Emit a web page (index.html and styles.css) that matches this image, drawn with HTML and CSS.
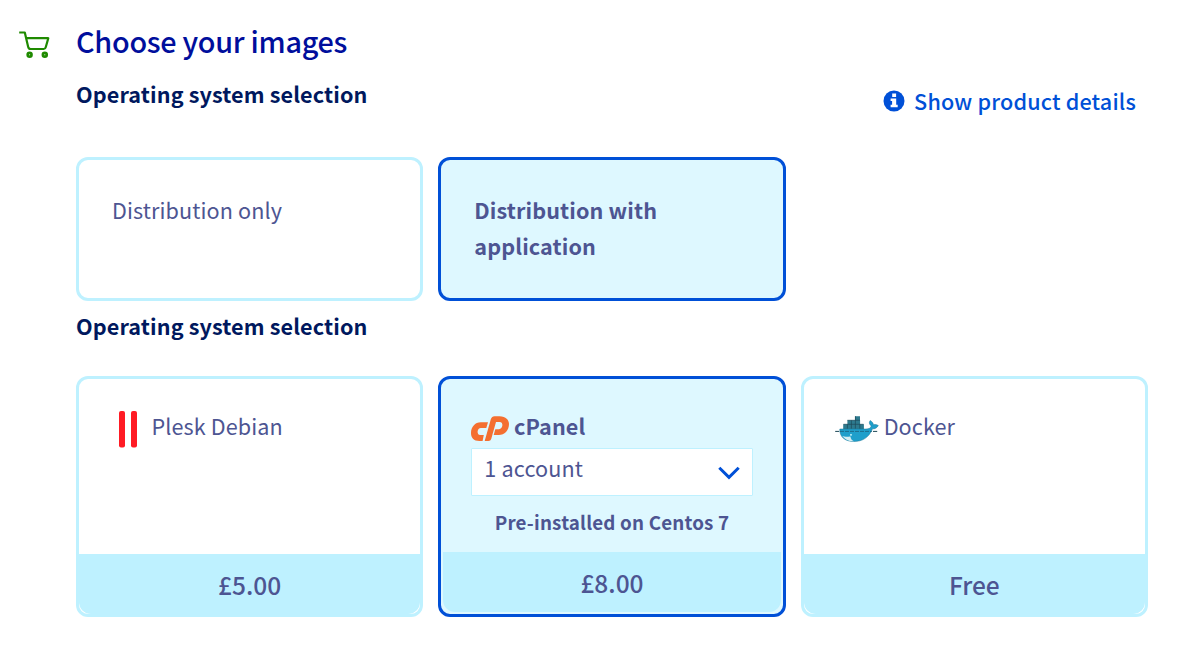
FILE: index.html
```
<!DOCTYPE html>
<html lang="en">
<head>
<meta charset="utf-8">
<title>Choose your images</title>
<link rel="stylesheet" href="styles.css">
</head>
<body>
<main class="step">
  <svg class="cart" viewBox="0 0 32 30" fill="none" stroke="#1f8a00" stroke-width="2.2" stroke-linejoin="round">
    <path d="M.2 2.5H5.8L9.2 17Q9.7 19 11.6 19H24.8Q26.3 19 26.8 17L29.3 8.2H7.6"/>
    <circle cx="10.6" cy="24.7" r="1.9" stroke-width="2.7"/><circle cx="25.8" cy="24.7" r="1.9" stroke-width="2.7"/>
  </svg>
  <div class="content">
    <h1 class="title">Choose your images</h1>
    <div class="bar">
      <h2 class="subtitle"><span>Operating system selection</span></h2>
      <a class="details">
        <svg class="info" viewBox="0 0 22 22"><circle cx="11" cy="11" r="10.5" fill="#0050d7"/><path fill="#fff" d="M9.2 3.6h3.9v3.3H9.2zM7.6 8.5h5.6v6.3h1.5v2.5H7.6v-2.5h1.5V11H7.6z"/></svg>
        <span>Show product details</span>
      </a>
    </div>
    <div class="grid types">
      <div class="card"><span class="label">Distribution only</span></div>
      <div class="card selected"><span class="label">Distribution with application</span></div>
    </div>
    <h2 class="subtitle second"><span>Operating system selection</span></h2>
    <div class="grid apps">
      <div class="card app">
        <div class="head">
          <svg class="plesk" viewBox="0 0 40 38" fill="#ff1b24"><rect x="10" y="1" width="6" height="36.5" rx="2"/><rect x="22" y="1" width="6" height="36.5" rx="2"/></svg>
          <span class="label">Plesk Debian</span>
        </div>
        <div class="price"><span>£5.00</span></div>
      </div>
      <div class="card app selected">
        <div class="head">
          <svg class="cpanel" viewBox="0 0 38 26" fill="#f46f30">
            <path d="M9.8 6.2H17L15.3 12H10C5.8 12 5.5 19 9.2 19H12.8L11.6 25H8.5C2.5 25 0 21.5 0 17C0 11 4 6.2 9.8 6.2Z"/>
            <path d="M19.8 3.3Q20.8.2 23.5.2H28.5C35 .2 38 4 38 8C38 14.5 33.5 19 27.8 19H22.7L24.3 13.2H28C31.9 13.2 32.9 6.1 28.6 6.1H25L20.2 23Q19.6 25 17.5 25H13.7Z"/>
          </svg>
          <span class="label">cPanel</span>
        </div>
        <div class="select">
          <span class="account">1 account</span>
          <svg class="chevron" viewBox="0 0 22 14" fill="none" stroke="#0050d7" stroke-width="3" stroke-linecap="butt"><path d="M1.3 1.8L11 11.3L20.7 1.8"/></svg>
        </div>
        <p class="note"><span>Pre-installed on Centos 7</span></p>
        <div class="price"><span>£8.00</span></div>
      </div>
      <div class="card app">
        <div class="head">
          <svg class="docker" viewBox="0 0 44 27">
            <path fill="#2d7a8e" d="M8.2 8.3h4.2V4.3h7.6V.2h5v4.1h.1v4h3.8v5H8.2z"/>
            <path d="M8.5 8.3h20M12.4 4.3H25M12.4 8.3v4.4M16.4 4.3v8.4M20.4.2v12.5M24.8 8.3v4.4" stroke="#1d4b5a" stroke-width=".7"/>
            <path fill="#1f9fcb" stroke="#157597" stroke-width=".5" d="M4.8 13H31C34 13 35.7 12 36.3 10C33.8 7.7 34 6.2 35.2 4.5C37.3 5.8 38.2 7 38.4 8.8C40.5 8.2 42 8.8 43.3 9.5C42 12 40 13 37.5 12.8C34 21.5 27.5 25.5 19 25.5C10 25.5 4.5 21 4.8 13Z"/>
            <path fill="#d5edf2" d="M7.2 20C10.5 21.5 13.5 20.3 15.5 20.5C15.5 22.8 17 24.4 19 25.3C14 25.5 10 23.5 7.2 20Z"/>
            <circle cx="16" cy="18.8" r=".9" fill="#dff"/>
            <path d="M.2 15.4H4.8M38 15.4H43" stroke="#1d4857" stroke-width="1" stroke-dasharray="4 .8"/>
            <path d="M5 15.4H37" stroke="#1d5f7a" stroke-width=".8" stroke-dasharray="4 1"/>
          </svg>
          <span class="label">Docker</span>
        </div>
        <div class="price"><span>Free</span></div>
      </div>
    </div>
  </div>
</main>
</body>
</html>
```
FILE: styles.css
```
* { box-sizing: border-box; }
body { margin: 0; background: #fff; color: #4d5592; font-family: "Noto Sans CJK SC", "Noto Sans", sans-serif; }
h1, h2, p { margin: 0; }
svg { display: block; flex: none; }
.step { display: flex; width: 1148px; padding-top: 22px; }
.cart { width: 32px; height: 30px; margin: 8px 25px 0 19px; }
.content { flex: 1; }
.title { color: #000e9c; font-size: 28.8px; letter-spacing: -.27px; line-height: 38px; font-weight: 500; white-space: nowrap; }
.bar { display: flex; justify-content: space-between; height: 97px; padding-top: 16px; }
.subtitle { color: #00185e; font-size: 21.6px; letter-spacing: .12px; line-height: 36px; font-weight: 700; white-space: nowrap; }
.details { display: flex; align-items: center; gap: 9px; height: 36px; margin: 7px 12px 0 0; color: #0050d7; font-size: 21.6px; letter-spacing: .18px; line-height: 36px; font-weight: 500; white-space: nowrap; }
.info { width: 22px; height: 22px; }
.grid { display: grid; grid-template-columns: repeat(3, 1fr); gap: 15px; }
.card { border: 3px solid #bef1ff; border-radius: 12px; background: #fff; }
.selected { border-color: #0050d7; background: #def8ff; }
.types .card { height: 144px; padding: 32px 33px; }
.label { display: block; font-size: 21.6px; letter-spacing: .11px; line-height: 36px; }
.selected .label { font-weight: 700; }
.second { margin-top: 7px; }
.apps { margin-top: 32px; }
.app { display: flex; flex-direction: column; height: 241px; padding-top: 30px; }
.head { display: flex; align-items: center; height: 39px; padding-left: 30px; }
.head .label { margin-bottom: 6px; }
.plesk { width: 40px; height: 38px; margin-right: 2.5px; }
.cpanel { width: 38px; height: 26px; margin: 1px 4.6px 0 0; }
.docker { width: 44px; height: 27px; margin: 1px 4.5px 0 1.5px; }
.select { display: flex; align-items: center; justify-content: space-between; height: 48px; margin: 0 30px; padding: 0 12px; border: 1px solid #bef1ff; border-radius: 1px; background: #fff; }
.account { height: 44px; font-size: 21.6px; letter-spacing: .15px; line-height: 36px; }
.chevron { width: 22px; height: 14px; margin-top: 2px; }
.note { margin-top: 8px; text-align: center; font-size: 18.8px; letter-spacing: .18px; line-height: 36px; font-weight: 700; }
.price { height: 60px; margin-top: auto; border-radius: 0 0 12px 12px; background: #bef1ff; text-align: center; font-size: 24.5px; line-height: 61px; font-weight: 500; }
.app.selected .price { margin: auto 2px 2px; }
```
